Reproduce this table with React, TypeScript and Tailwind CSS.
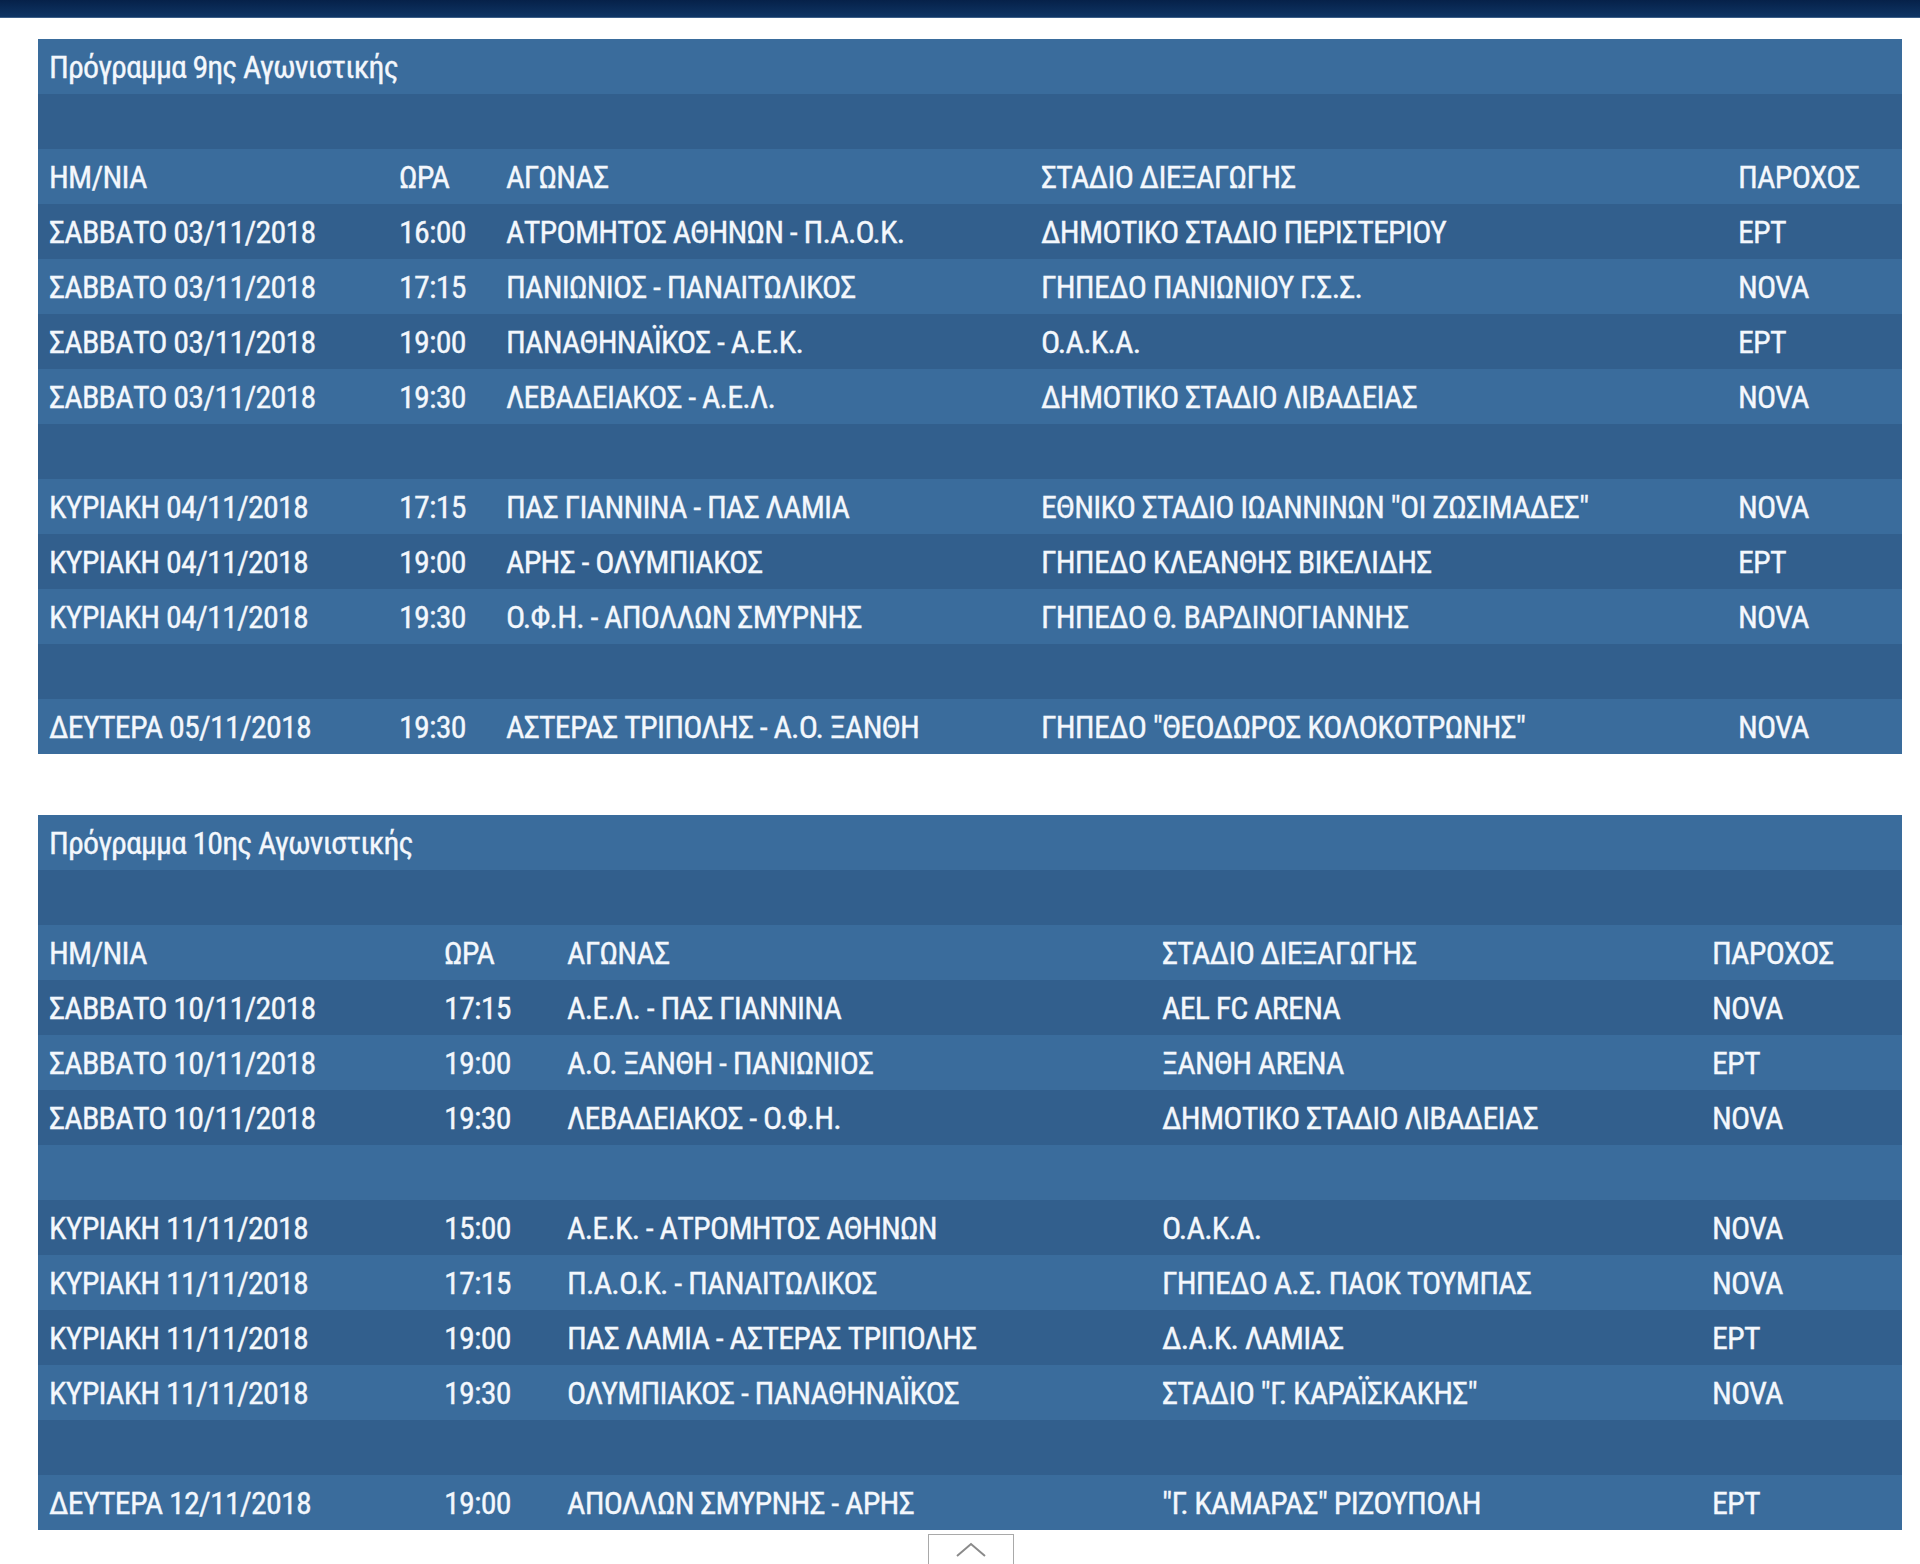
import React from "react";

type Row = [string, string, string, string, string] | null;

const t1: Row[] = [
  ["ΣΑΒΒΑΤΟ 03/11/2018", "16:00", "ΑΤΡΟΜΗΤΟΣ ΑΘΗΝΩΝ - Π.Α.Ο.Κ.", "ΔΗΜΟΤΙΚΟ ΣΤΑΔΙΟ ΠΕΡΙΣΤΕΡΙΟΥ", "ΕΡΤ"],
  ["ΣΑΒΒΑΤΟ 03/11/2018", "17:15", "ΠΑΝΙΩΝΙΟΣ - ΠΑΝΑΙΤΩΛΙΚΟΣ", "ΓΗΠΕΔΟ ΠΑΝΙΩΝΙΟΥ Γ.Σ.Σ.", "NOVA"],
  ["ΣΑΒΒΑΤΟ 03/11/2018", "19:00", "ΠΑΝΑΘΗΝΑΪΚΟΣ - Α.Ε.Κ.", "Ο.Α.Κ.Α.", "ΕΡΤ"],
  ["ΣΑΒΒΑΤΟ 03/11/2018", "19:30", "ΛΕΒΑΔΕΙΑΚΟΣ - Α.Ε.Λ.", "ΔΗΜΟΤΙΚΟ ΣΤΑΔΙΟ ΛΙΒΑΔΕΙΑΣ", "NOVA"],
  null,
  ["ΚΥΡΙΑΚΗ 04/11/2018", "17:15", "ΠΑΣ ΓΙΑΝΝΙΝΑ - ΠΑΣ ΛΑΜΙΑ", "ΕΘΝΙΚΟ ΣΤΑΔΙΟ ΙΩΑΝΝΙΝΩΝ \"ΟΙ ΖΩΣΙΜΑΔΕΣ\"", "NOVA"],
  ["ΚΥΡΙΑΚΗ 04/11/2018", "19:00", "ΑΡΗΣ - ΟΛΥΜΠΙΑΚΟΣ", "ΓΗΠΕΔΟ ΚΛΕΑΝΘΗΣ ΒΙΚΕΛΙΔΗΣ", "ΕΡΤ"],
  ["ΚΥΡΙΑΚΗ 04/11/2018", "19:30", "Ο.Φ.Η. - ΑΠΟΛΛΩΝ ΣΜΥΡΝΗΣ", "ΓΗΠΕΔΟ Θ. ΒΑΡΔΙΝΟΓΙΑΝΝΗΣ", "NOVA"],
  null,
  ["ΔΕΥΤΕΡΑ 05/11/2018", "19:30", "ΑΣΤΕΡΑΣ ΤΡΙΠΟΛΗΣ - Α.Ο. ΞΑΝΘΗ", "ΓΗΠΕΔΟ \"ΘΕΟΔΩΡΟΣ ΚΟΛΟΚΟΤΡΩΝΗΣ\"", "NOVA"],
];

const t2: Row[] = [
  ["ΣΑΒΒΑΤΟ 10/11/2018", "17:15", "Α.Ε.Λ. - ΠΑΣ ΓΙΑΝΝΙΝΑ", "AEL FC ARENA", "NOVA"],
  ["ΣΑΒΒΑΤΟ 10/11/2018", "19:00", "Α.Ο. ΞΑΝΘΗ - ΠΑΝΙΩΝΙΟΣ", "ΞΑΝΘΗ ARENA", "ΕΡΤ"],
  ["ΣΑΒΒΑΤΟ 10/11/2018", "19:30", "ΛΕΒΑΔΕΙΑΚΟΣ - Ο.Φ.Η.", "ΔΗΜΟΤΙΚΟ ΣΤΑΔΙΟ ΛΙΒΑΔΕΙΑΣ", "NOVA"],
  null,
  ["ΚΥΡΙΑΚΗ 11/11/2018", "15:00", "Α.Ε.Κ. - ΑΤΡΟΜΗΤΟΣ ΑΘΗΝΩΝ", "Ο.Α.Κ.Α.", "NOVA"],
  ["ΚΥΡΙΑΚΗ 11/11/2018", "17:15", "Π.Α.Ο.Κ. - ΠΑΝΑΙΤΩΛΙΚΟΣ", "ΓΗΠΕΔΟ Α.Σ. ΠΑΟΚ ΤΟΥΜΠΑΣ", "NOVA"],
  ["ΚΥΡΙΑΚΗ 11/11/2018", "19:00", "ΠΑΣ ΛΑΜΙΑ - ΑΣΤΕΡΑΣ ΤΡΙΠΟΛΗΣ", "Δ.Α.Κ. ΛΑΜΙΑΣ", "ΕΡΤ"],
  ["ΚΥΡΙΑΚΗ 11/11/2018", "19:30", "ΟΛΥΜΠΙΑΚΟΣ - ΠΑΝΑΘΗΝΑΪΚΟΣ", "ΣΤΑΔΙΟ \"Γ. ΚΑΡΑΪΣΚΑΚΗΣ\"", "NOVA"],
  null,
  ["ΔΕΥΤΕΡΑ 12/11/2018", "19:00", "ΑΠΟΛΛΩΝ ΣΜΥΡΝΗΣ - ΑΡΗΣ", "\"Γ. ΚΑΜΑΡΑΣ\" ΡΙΖΟΥΠΟΛΗ", "ΕΡΤ"],
];

const header: [string, string, string, string, string] = [
  "ΗΜ/ΝΙΑ",
  "ΩΡΑ",
  "ΑΓΩΝΑΣ",
  "ΣΤΑΔΙΟ ΔΙΕΞΑΓΩΓΗΣ",
  "ΠΑΡΟΧΟΣ",
];

function Table({ title, rows, cols }: { title: string; rows: Row[]; cols: string }) {
  const all: (Row | "title" | "empty")[] = ["title", "empty", header, ...rows];
  return (
    <div className="w-[1864px] flex flex-col shadow-[inset_0_0_0_1px_#2b527d]">
      {all.map((r, i) => {
        const bg = i % 2 === 0 ? "bg-[#3a6c9c]" : "bg-[#325f8d]";
        if (r === "title") {
          return (
            <div key={i} className={`${bg} h-[55px] flex items-center pl-[11px] tracking-[-0.9px]`}>
              <span>{title}</span>
            </div>
          );
        }
        if (r === "empty" || r === null) {
          return <div key={i} className={`${bg} h-[55px]`} />;
        }
        return (
          <div key={i} className={`${bg} h-[55px] grid ${cols} items-center`}>
            {r.map((c, j) => (
              <div key={j} className="pl-[11px] whitespace-nowrap">
                {c}
              </div>
            ))}
          </div>
        );
      })}
    </div>
  );
}

export default function App() {
  return (
    <div className="w-[1920px] h-[1564px] bg-white overflow-hidden font-['Liberation_Sans_Narrow','Roboto_Condensed','Liberation_Sans',sans-serif] text-[32px] leading-none tracking-[-0.8px] text-[#f3f7fc] [-webkit-text-stroke:0.3px_#f3f7fc]">
      <div className="h-[18px] bg-gradient-to-b from-[#062149] to-[#0f3564] border-b border-[#3c5f88]" />
      <div className="pl-[38px] pt-[21px] flex flex-col">
        <Table title="Πρόγραμμα 9ης Αγωνιστικής" rows={t1} cols="grid-cols-[350px_107px_535px_697px_1fr]" />
        <div className="h-[61px]" />
        <Table title="Πρόγραμμα 10ης Αγωνιστικής" rows={t2} cols="grid-cols-[395px_123px_595px_550px_1fr]" />
        <div className="pl-[890px] pt-[4px]">
          <div className="w-[86px] h-[40px] border border-[#a9a9a9] bg-white flex justify-center pt-[5px]">
            <svg width="34" height="18" viewBox="0 0 34 18" fill="none">
              <path d="M3 16 L17 4 L31 16" stroke="#8a8a8a" strokeWidth="2" />
            </svg>
          </div>
        </div>
      </div>
    </div>
  );
}
